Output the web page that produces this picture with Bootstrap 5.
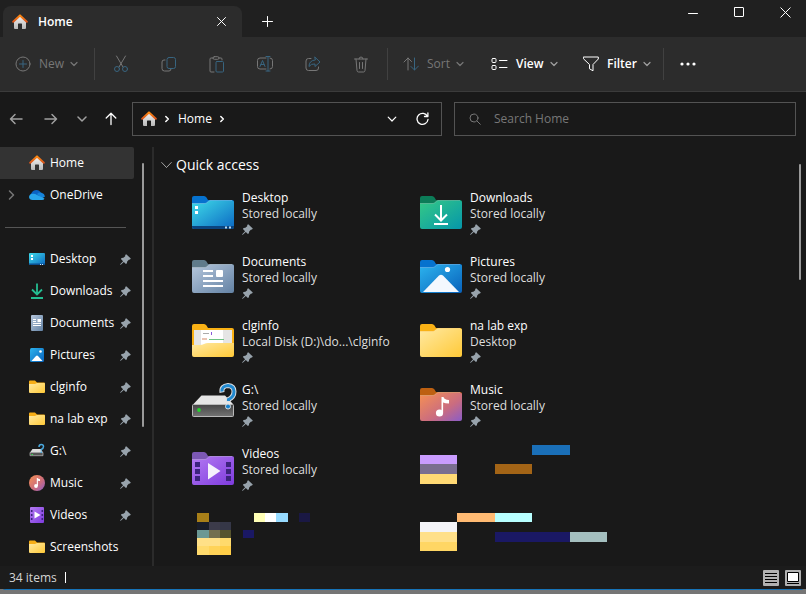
<!DOCTYPE html>
<html lang="en" data-bs-theme="dark">
<head>
<meta charset="utf-8">
<meta name="viewport" content="width=device-width, initial-scale=1">
<title>Home</title>
<link rel="stylesheet" href="https://cdn.jsdelivr.net/npm/bootstrap@5.3.0/dist/css/bootstrap.min.css">
<style>
body{font-family:"Open Sans","Noto Sans",sans-serif;font-size:12px;line-height:16px;color:#fff;background:#757575}
button{border:0;background:none;color:inherit;padding:0}
svg{display:block;flex-shrink:0}
a{color:inherit;text-decoration:none}
.window{min-height:calc(100vh - 4px);background:#191919;border-bottom:1px solid #1673b8;border-radius:0 0 6px 6px}
.line{fill:none;stroke:currentColor;stroke-linecap:round;stroke-linejoin:round}
.titlebar{background:#202020;height:37px;padding-left:3px}
.tab{background:#2c2c2c;width:239px;height:31px;border-radius:8px 8px 0 0;padding:0 15px 0 9px;gap:10px;font-weight:600}
.newtab{width:50px;height:31px}
.winctl{gap:4px}
.winctl button{width:42px;height:24px}
.center{display:flex;align-items:center;justify-content:center}
.toolbar{background:#2c2c2c;height:55px;border-bottom:1px solid #3b3b3b}
.tool{display:flex;align-items:center;height:54px;padding-left:15px;gap:8px;font-weight:600}
.tool svg:last-child{color:#a0a0a0;margin-left:-2px}
.tool.w-new{width:94px}.tool.w-sort{width:88px}.tool.w-view{width:92px}.tool.w-filter{width:95px}
.tool.off,.tool.off svg:last-child{color:#777}
.tool.off{font-weight:500}
.iconset{margin:0 2px}
.iconset button,.more{width:48px;height:54px;color:#777}
.rule{width:1px;height:32px;background:#414141}
.accent{stroke:#386580}
.navrow{height:55px;padding:0 10px 2px 0}
.navbtn{height:34px;color:#a0a0a0}
.n-back{width:32px}.n-fwd{width:38px}.n-down{width:24px}.n-up{width:34px;color:#fff}
.address,.search{height:34px;border:1px solid #535353}
.address{flex:292 1 0;margin-left:4px;padding:0 8px;gap:7px}
.search{flex:326 1 0;margin-left:12px;padding-left:14px;gap:13px;color:#777}
.search input{border:0;outline:0;background:none;color:#fff;min-width:0}
.search input::placeholder{color:#777;opacity:1}
.crumb{font-weight:500}
.side{width:134px}
.side a{display:flex;align-items:center;height:32px;padding:0 3px 0 8px;gap:5px}
.side a span{flex:1;white-space:nowrap}
.side a.current{background:#333;border-radius:0 2px 2px 0}
.twist{width:16px;flex-shrink:0;color:#777}
.side hr{margin:16px 8px 15px 5px;border-color:#555;opacity:1}
.track{width:18px;padding:16px 0 0 8px}
.thumb{width:2px;height:264px;background:#9a9a9a;border-radius:2px}
.split{width:2px;background:#2b2b2b}
.pane{padding:10px 0 0 7px}
.heading{font-size:14px;line-height:16px;gap:4px;height:16px}
.files{display:grid;grid-template-columns:repeat(auto-fill,228px);grid-auto-rows:56px;row-gap:8px;padding:17px 0 0 31px;margin:0;list-style:none}
.files a{display:flex;gap:8px}
.files small{display:block;font-size:12px;color:#dedede;white-space:nowrap}
.pin{margin-top:2px}
.maintrack{width:7px;padding-top:17px}
.maintrack .thumb{height:116px}
.status{background:#1c1c1c;height:23px;padding:0 5px 0 9px;color:#d5d5d5}
.caret{width:1px;height:11px;background:#fff;margin-left:8px}
.views{gap:6px}
</style>
<script src="https://cdn.jsdelivr.net/npm/bootstrap@5.3.0/dist/js/bootstrap.bundle.min.js"></script>
</head>
<body>
<svg width="0" height="0" class="position-absolute" aria-hidden="true">
<defs>
<linearGradient id="gHome" x1="0" y1="0" x2="0" y2="1"><stop stop-color="#f4f4f4"/><stop offset="1" stop-color="#b8b8b8"/></linearGradient>
<linearGradient id="gRoof" x1="0" y1="0" x2="0" y2="1"><stop stop-color="#ff8a12"/><stop offset="1" stop-color="#d9541c"/></linearGradient>
<linearGradient id="gYel" x1="0" y1="0" x2="1" y2="1"><stop stop-color="#ffe9a2"/><stop offset="1" stop-color="#ffc937"/></linearGradient>
<linearGradient id="gDesk" x1="0" y1="0" x2="1" y2="1"><stop stop-color="#3fdbe8"/><stop offset="1" stop-color="#0b68c3"/></linearGradient>
<linearGradient id="gDown" x1="0" y1="0" x2="1" y2="1"><stop stop-color="#35c986"/><stop offset="1" stop-color="#0596aa"/></linearGradient>
<linearGradient id="gDoc" x1="0" y1="0" x2="1" y2="1"><stop stop-color="#b6c7dc"/><stop offset="1" stop-color="#6382a4"/></linearGradient>
<linearGradient id="gPic" x1="0" y1="0" x2="1" y2="1"><stop stop-color="#2cb3ee"/><stop offset="1" stop-color="#0862bb"/></linearGradient>
<linearGradient id="gMus" x1="0" y1="0" x2="1" y2="1"><stop stop-color="#f79152"/><stop offset=".6" stop-color="#ca6c80"/><stop offset="1" stop-color="#8a5cc8"/></linearGradient>
<linearGradient id="gVid" x1="0" y1="0" x2="1" y2="1"><stop stop-color="#b47af2"/><stop offset="1" stop-color="#7e3bde"/></linearGradient>
<linearGradient id="gDisk" x1="0" y1="0" x2="0" y2="1"><stop stop-color="#454545"/><stop offset="1" stop-color="#747474"/></linearGradient>
<symbol id="home" viewBox="0 0 16 16"><path fill="url(#gHome)" d="M2 7 8 1.500l6 5.500v7q0 1-1 1h-3v-5q0-.5-.5-.5h-3q-.5 0-.5.5v5H3q-1 0-1-1z"/><path fill="none" stroke="url(#gRoof)" stroke-width="2" stroke-linecap="round" stroke-linejoin="round" d="M1.200 7.800 8 1.400l6.800 6.400"/></symbol>
<symbol id="chev" viewBox="0 0 8 8"><path class="line" stroke-width="1.200" d="m1 2.500 3 3 3-3"/></symbol>
<symbol id="chevr" viewBox="0 0 8 8"><path class="line" stroke-width="1.500" d="m2.800 1.500 2.500 2.500-2.500 2.500"/></symbol>
<symbol id="pin" viewBox="0 0 11 11"><path fill="#98a3ac" d="M6.200.2 10.800 4.600 10 5.600 8.800 5.700 7.200 7.500 6.900 9.300 5.900 9.900 3.800 7.900.8 10.800.2 10.800V10.200L3.100 7.200.9 5 1.600 4.100 3.400 3.800 5.200 2.200 5.200.9z"/></symbol>
<symbol id="folder" viewBox="0 0 16 14"><path fill="#f6ad16" d="M0 1.500Q0 .5 1 .5h5l2 2h7q1 0 1 1v6H0z"/><path fill="url(#gYel)" d="M0 4h6l2-1h7q1 0 1 1v8q0 1-1 1H1q-1 0-1-1z"/></symbol>
<symbol id="tabshape" viewBox="0 0 42 33"><path d="M0 2Q0 0 2 0H12Q13.500 0 14.500 1.500L16 4H40Q42 4 42 6V22H0z"/></symbol>
<symbol id="front" viewBox="0 0 42 33"><path d="M0 7.500H13Q14 7.500 15.500 6T18 4.500H40Q42 4.500 42 6.500V31Q42 33 40 33H2Q0 33 0 31z"/><path fill="none" stroke="#fff" stroke-opacity=".25" d="M0 7.500H13Q14 7.500 15.500 6T18 4.500H40"/></symbol>
</defs>
</svg>

<div class="window d-flex flex-column">
<header class="titlebar d-flex align-items-end">
  <div class="tab d-flex align-items-center"><svg width="16" height="16"><use href="#home"/></svg><span class="flex-grow-1">Home</span>
    <button type="button" aria-label="Close tab"><svg width="11" height="11" viewBox="0 0 11 11"><path class="line" d="m1.500 1.500 8 8m0-8-8 8"/></svg></button></div>
  <button type="button" class="newtab center" aria-label="New tab"><svg width="11" height="11" viewBox="0 0 11 11"><path class="line" d="M5.500.5v10M.5 5.500h10"/></svg></button>
  <div class="winctl d-flex ms-auto align-self-start">
    <button type="button" class="center" aria-label="Minimize"><svg width="10" height="11" viewBox="0 0 10 11"><path class="line" d="M.5 6.500h9"/></svg></button>
    <button type="button" class="center" aria-label="Maximize"><svg width="11" height="11" viewBox="0 0 11 11"><rect class="line" x=".5" y=".5" width="9" height="9" rx=".5"/></svg></button>
    <button type="button" class="center" aria-label="Close"><svg width="11" height="11" viewBox="0 0 11 11"><path class="line" d="m.8.8 9.400 9.400m0-9.400-9.400 9.400"/></svg></button>
  </div>
</header>

<div class="toolbar d-flex align-items-center" role="toolbar" aria-label="Commands">
  <button type="button" class="tool w-new off"><svg width="16" height="16" viewBox="0 0 16 16"><circle class="line" cx="8" cy="8" r="7"/><path class="line accent" d="M8 4.500v7M4.500 8h7"/></svg>New<svg width="8" height="8"><use href="#chev"/></svg></button>
  <div class="rule"></div>
  <div class="iconset d-flex">
    <button type="button" class="center" aria-label="Cut"><svg width="16" height="18" viewBox="0 0 16 18"><path class="line" d="m3.500 1 6.500 11M12.500 1 6 12"/><circle class="line accent" cx="4" cy="14" r="2.500"/><circle class="line accent" cx="12" cy="14" r="2.500"/></svg></button>
    <button type="button" class="center" aria-label="Copy"><svg width="16" height="16" viewBox="0 0 16 16"><path class="line" d="M4 4H3Q1 4 1 6v6.500Q1 15 3.500 15H8q2 0 2-2"/><rect class="line accent" x="6" y="1.500" width="8.500" height="11" rx="2"/></svg></button>
    <button type="button" class="center" aria-label="Paste"><svg width="16" height="17" viewBox="0 0 16 17"><path class="line" d="M4 2H2Q1 2 1 3v12q0 1 1 1h3M10 2h2q1 0 1 1v1"/><rect class="line" x="4" y=".7" width="6" height="2.600" rx="1.300"/><rect class="line accent" x="7" y="5.500" width="7.500" height="10.500" rx="1"/></svg></button>
    <button type="button" class="center" aria-label="Rename"><svg width="16" height="16" viewBox="0 0 16 16"><path class="line" d="M9 2H3Q.5 2 .5 4.500v6Q.5 13 3 13h6m4-11q2.500 0 2.500 2.500v6q0 2.500-2.500 2.500"/><path class="line accent" d="M9 .5h4M9 15h4M11 .5V15M3 10.500 5.500 4.500 8 10.500M4 8.500h3"/></svg></button>
    <button type="button" class="center" aria-label="Share"><svg width="16" height="16" viewBox="0 0 16 16"><path class="line" d="M6 2.500H3.500Q1 2.500 1 5v7q0 2.500 2.500 2.500H11q2.500 0 2.500-2.500v-1"/><path class="line accent" d="M10 1.200 15 6l-5 4.500V8Q6 7.500 4 10.500 4 4.500 10 4z"/></svg></button>
    <button type="button" class="center" aria-label="Delete"><svg width="16" height="17" viewBox="0 0 16 17"><path class="line" d="M1.500 3h13M6 3q0-2 2-2t2 2M3 3l1 11.500Q4.200 16 5.500 16h5q1.300 0 1.500-1.500L13 3M6.500 6.500v6M9.500 6.500v6"/></svg></button>
  </div>
  <div class="rule"></div>
  <button type="button" class="tool w-sort off"><svg width="16" height="16" viewBox="0 0 16 16"><path class="line" d="M5 14V2M1 6l4-4 3.500 3.500"/><path class="line accent" d="M11.500 2v12M8 10.500l3.500 3.500 4-4"/></svg>Sort<svg width="8" height="8"><use href="#chev"/></svg></button>
  <button type="button" class="tool w-view"><svg width="17" height="14" viewBox="0 0 17 14"><rect class="line" x="1" y="1.500" width="4" height="4" rx="1"/><rect class="line" x="1" y="8.500" width="4" height="4" rx="1"/><path class="line" d="M8.500 3.500h7.500M8.500 10.500h7.500"/></svg>View<svg width="8" height="8"><use href="#chev"/></svg></button>
  <button type="button" class="tool w-filter"><svg width="16" height="16" viewBox="0 0 16 16"><path class="line" d="M.7 1h14.600v2L10 8.500v6.300l-3.500-2V8.500L.7 3z"/></svg>Filter<svg width="8" height="8"><use href="#chev"/></svg></button>
  <div class="rule"></div>
  <button type="button" class="more center" aria-label="More"><svg width="16" height="4" viewBox="0 0 16 4" fill="#fff"><circle cx="2" cy="2" r="1.600"/><circle cx="8" cy="2" r="1.600"/><circle cx="14" cy="2" r="1.600"/></svg></button>
</div>

<div class="navrow d-flex align-items-center">
  <button type="button" class="navbtn n-back center" aria-label="Back"><svg width="14" height="12" viewBox="0 0 14 12"><path class="line" stroke-width="1.500" d="M13 6H1.500M6 1.500 1.500 6 6 10.500"/></svg></button>
  <button type="button" class="navbtn n-fwd center" aria-label="Forward"><svg width="14" height="12" viewBox="0 0 14 12"><path class="line" stroke-width="1.500" d="M1 6h11.500M8 1.500 12.500 6 8 10.500"/></svg></button>
  <button type="button" class="navbtn n-down center" aria-label="Recent locations"><svg width="10" height="10" viewBox="0 0 10 10"><path class="line" stroke-width="1.500" d="m1 3 4 4 4-4"/></svg></button>
  <button type="button" class="navbtn n-up center" aria-label="Up"><svg width="12" height="14" viewBox="0 0 12 14"><path class="line" stroke-width="1.300" d="M6 12.500V1.500M1.200 6 6 1.300 10.800 6"/></svg></button>
  <div class="address d-flex align-items-center">
    <svg width="16" height="16"><use href="#home"/></svg><svg width="7" height="8" viewBox="1 0 7 8"><use href="#chevr" width="8" height="8"/></svg>
    <a href="#" class="crumb">Home</a><svg width="7" height="8" viewBox="1 0 7 8"><use href="#chevr" width="8" height="8"/></svg>
    <button type="button" class="ms-auto me-2" aria-label="Previous locations"><svg width="10" height="10" viewBox="0 0 10 10"><path class="line" stroke-width="1.200" d="m1.200 3.200 3.800 3.800 3.800-3.800"/></svg></button>
    <button type="button" class="ms-1 me-1" aria-label="Refresh"><svg width="13" height="14" viewBox="0 0 13 14"><path class="line" stroke-width="1.300" d="M11.500 4.500A5.500 5.500 0 1 0 12 7.500M11.900 1v3.500H8.500"/></svg></button>
  </div>
  <div class="search d-flex align-items-center">
    <svg width="12" height="12" viewBox="0 0 12 12"><circle class="line" cx="5" cy="5" r="4"/><path class="line" d="m8 8 3.300 3.300"/></svg>
    <input type="search" class="flex-grow-1 p-0" aria-label="Search Home" placeholder="Search Home">
  </div>
</div>

<div class="d-flex flex-grow-1">
<nav class="side" aria-label="Folders">
  <a href="#" class="current"><i class="twist"></i><svg width="16" height="16"><use href="#home"/></svg><span>Home</span></a>
  <a href="#"><i class="twist"><svg width="8" height="12" viewBox="0 0 8 12"><path class="line" stroke-width="1.500" d="m1.500 2 4 4-4 4"/></svg></i><svg width="16" height="16" viewBox="0 0 16 16"><path fill="#0a63c4" d="M2 9Q.8 7.500 2.500 6 4 3 7.500 3q3 0 4.500 3l-3 3z"/><path fill="#1683da" d="M8 7q2-2 4.500-1.200Q15.500 6.500 16 9.500L12 12z"/><path fill="#28a5ec" d="M3.500 13Q.3 13 0 10q.3-3 3.500-3.200Q6 6.500 8 8l7.500 3.500Q15 13 13 13z"/></svg><span>OneDrive</span></a>
  <hr>
  <a href="#"><i class="twist"></i><svg width="16" height="12" viewBox="0 0 16 12"><rect width="16" height="12" rx="1" fill="url(#gDesk)"/><path fill="#fff" d="M2 2h2v2H2zM2 5h2v2H2z"/><path fill="#0a4d8e" d="M0 10.500h16V11q0 1-1 1H1q-1 0-1-1z"/><path fill="#cfeaff" d="M11 11h1v1h-1zM13 11h1v1h-1z"/></svg><span>Desktop</span><svg width="11" height="11"><use href="#pin"/></svg></a>
  <a href="#"><i class="twist"></i><svg width="16" height="16" viewBox="0 0 16 16"><path fill="none" stroke="#24bd91" stroke-width="1.800" d="M8 .5v10.500M3 6.500l5 5 5-5M2 15h12"/></svg><span>Downloads</span><svg width="11" height="11"><use href="#pin"/></svg></a>
  <a href="#"><i class="twist"></i><svg width="16" height="16" viewBox="0 0 16 16"><rect x="2" width="12" height="16" rx="1" fill="url(#gDoc)"/><path stroke="#fff" d="M4 4.500h3M4 6.500h3M4 8.500h8M4 10.500h8"/><path fill="#fff" d="M8.500 4H12v3.200H8.500z"/></svg><span>Documents</span><svg width="11" height="11"><use href="#pin"/></svg></a>
  <a href="#"><i class="twist"></i><svg width="16" height="16" viewBox="0 0 16 16"><rect x="1" y="1" width="14" height="14" rx="1.500" fill="url(#gPic)"/><path fill="#fff" d="m2.500 14 4.500-5q1-1 2 0l4.500 5z"/><circle cx="11.500" cy="4.500" r="1.300" fill="#fff"/></svg><span>Pictures</span><svg width="11" height="11"><use href="#pin"/></svg></a>
  <a href="#"><i class="twist"></i><svg width="16" height="14"><use href="#folder"/></svg><span>clginfo</span><svg width="11" height="11"><use href="#pin"/></svg></a>
  <a href="#"><i class="twist"></i><svg width="16" height="14"><use href="#folder"/></svg><span>na lab exp</span><svg width="11" height="11"><use href="#pin"/></svg></a>
  <a href="#"><i class="twist"></i><svg width="16" height="16" viewBox="0 0 16 16"><path fill="#dcdcdc" d="M1 9.500 3.500 6H12l2 3.500z"/><path fill="#555" stroke="#bbb" stroke-width=".7" d="M1 9.500h13v3.200H1z"/><path fill="#35e04a" d="M2.500 11H4v1H2.500z"/><path fill="none" stroke="#4aa8dd" stroke-width="1.500" d="M10 4q0-2.500 2.300-2.500Q14.500 1.500 14.500 3.500T12.300 6.500V7.500M12.300 8.500V10"/></svg><span>G:\</span><svg width="11" height="11"><use href="#pin"/></svg></a>
  <a href="#"><i class="twist"></i><svg width="16" height="16" viewBox="0 0 16 16"><circle cx="8" cy="8" r="8" fill="url(#gMus)"/><circle cx="7" cy="11" r="1.900" fill="#fff"/><path fill="#fff" d="M7.800 3h.8q.4 1 2.400 1.200V6Q9.800 6 8.900 5.500V11H7.800z"/></svg><span>Music</span><svg width="11" height="11"><use href="#pin"/></svg></a>
  <a href="#"><i class="twist"></i><svg width="16" height="16" viewBox="0 0 16 16"><rect x="1" width="14" height="16" rx="1" fill="url(#gVid)"/><path fill="#fff" d="m5.500 4.500 6 3.500-6 3.500z"/><path stroke="#3c237e" stroke-width="1.600" stroke-dasharray="2 2" d="M2.700 3v10.500M13.300 3v10.500"/></svg><span>Videos</span><svg width="11" height="11"><use href="#pin"/></svg></a>
  <a href="#"><i class="twist"></i><svg width="16" height="14"><use href="#folder"/></svg><span>Screenshots</span></a>
</nav>
<div class="track"><div class="thumb"></div></div>
<div class="split"></div>
<main class="pane flex-grow-1">
  <button type="button" class="heading d-flex align-items-center"><svg width="11" height="10" viewBox="0 0 11 10"><path class="line" stroke-opacity=".6" d="m.7 2.500 4.800 5 4.800-5"/></svg>Quick access</button>
  <ul class="files">
    <li><a href="#"><svg width="42" height="45" viewBox="0 -6 42 45"><g fill="#0672ce"><use href="#tabshape" width="42" height="33"/></g><g fill="url(#gDesk)"><use href="#front" width="42" height="33"/></g><path fill="#0a4480" d="M0 30h42v1q0 2-2 2H2q-2 0-2-2z"/><path fill="#b5d8f0" d="M33 30.500h2v2h-2zM37 30.500h2v2h-2z"/><path fill="#fff" d="M3 10h3v3H3zM3 15h3v3H3z"/></svg><div>Desktop<small>Stored locally</small><svg class="pin" width="11" height="11"><use href="#pin"/></svg></div></a></li>
    <li><a href="#"><svg width="42" height="45" viewBox="0 -6 42 45"><g fill="#0c7c58"><use href="#tabshape" width="42" height="33"/></g><g fill="url(#gDown)"><use href="#front" width="42" height="33"/></g><path fill="none" stroke="#fff" stroke-width="2" d="M21 9v15M15 18.500l6 6 6-6M14 28h14"/></svg><div>Downloads<small>Stored locally</small><svg class="pin" width="11" height="11"><use href="#pin"/></svg></div></a></li>
    <li><a href="#"><svg width="42" height="45" viewBox="0 -6 42 45"><g fill="#607b8b"><use href="#tabshape" width="42" height="33"/></g><g fill="url(#gDoc)"><use href="#front" width="42" height="33"/></g><path stroke="#fff" stroke-width="2" d="M11 11h10M11 16h10M11 21h20M11 26h20"/><rect x="24" y="10" width="7" height="7" rx="1" fill="#fff"/></svg><div>Documents<small>Stored locally</small><svg class="pin" width="11" height="11"><use href="#pin"/></svg></div></a></li>
    <li><a href="#"><svg width="42" height="45" viewBox="0 -6 42 45"><g fill="#0672ce"><use href="#tabshape" width="42" height="33"/></g><g fill="url(#gPic)"><use href="#front" width="42" height="33"/></g><path fill="#f3f8fe" d="M3 32 19 15.500q2-1.500 4 0L39 32z"/><circle cx="27.500" cy="9.500" r="2.600" fill="#fff"/></svg><div>Pictures<small>Stored locally</small><svg class="pin" width="11" height="11"><use href="#pin"/></svg></div></a></li>
    <li><a href="#"><svg width="42" height="45" viewBox="0 -6 42 45"><g fill="#f9b115"><use href="#tabshape" width="42" height="33"/></g><path fill="#e5e5e5" d="M2 6h38v16H2z"/><path fill="#fff" d="M9 6h22v15H9z"/><path stroke="#aaa" d="M11 9.500h6"/><path stroke="#8a57d8" d="M19.500 8v3"/><path stroke="#d58a66" d="M10 15h5"/><path stroke="#6cc283" d="M17 15.500h15"/><path fill="url(#gYel)" d="M0 21h8q2 0 4-1t4-1h26v12q0 2-2 2H2q-2 0-2-2z"/></svg><div>clginfo<small>Local Disk (D:)\do...\clginfo</small><svg class="pin" width="11" height="11"><use href="#pin"/></svg></div></a></li>
    <li><a href="#"><svg width="42" height="45" viewBox="0 -6 42 45"><g fill="#f9b115"><use href="#tabshape" width="42" height="33"/></g><g fill="url(#gYel)"><use href="#front" width="42" height="33"/></g></svg><div>na lab exp<small>Desktop</small><svg class="pin" width="11" height="11"><use href="#pin"/></svg></div></a></li>
    <li><a href="#"><svg width="42" height="45" viewBox="0 0 42 45" overflow="visible"><path fill="#e5e5e5" d="M1 22.500 9.500 13.500H33l8.500 9z"/><rect x=".5" y="22.500" width="41" height="12" rx="1" fill="url(#gDisk)" stroke="#b9b9b9"/><circle cx="7" cy="28" r="1.900" fill="#22d52b"/><g fill="none"><path stroke="#d8dde1" stroke-width="5" d="M30 10.500Q29 4 36 3.500 42 4 42 9.500T36.500 17.500V19.500"/><path stroke="#2189cf" stroke-width="3" d="M30 9.500Q29.500 4 36 3.500 42 4 42 9.500T36.500 17.500V19"/></g><circle cx="36" cy="24.500" r="2.500" fill="#1681cb" stroke="#d8dde1"/></svg><div>G:\<small>Stored locally</small><svg class="pin" width="11" height="11"><use href="#pin"/></svg></div></a></li>
    <li><a href="#"><svg width="42" height="45" viewBox="0 -6 42 45"><g fill="#bd6011"><use href="#tabshape" width="42" height="33"/></g><g fill="url(#gMus)"><use href="#front" width="42" height="33"/></g><circle cx="19.500" cy="25" r="3.600" fill="#fff"/><path fill="#fff" d="M21.500 9h2q.5 2.500 5.500 3v3.500q-4 0-5.900-1V25h-1.600z"/></svg><div>Music<small>Stored locally</small><svg class="pin" width="11" height="11"><use href="#pin"/></svg></div></a></li>
    <li><a href="#"><svg width="42" height="45" viewBox="0 -6 42 45"><g fill="#7c58b4"><use href="#tabshape" width="42" height="33"/></g><g fill="url(#gVid)"><use href="#front" width="42" height="33"/></g><path fill="#3c237e" d="M3 10h5v5H3zM3 17h5v5H3zM3 24h5v5H3zM34 10h5v5h-5zM34 17h5v5h-5zM34 24h5v5h-5z"/><path fill="#f5f1fc" d="m16 11 12.500 8L16 27.500z"/></svg><div>Videos<small>Stored locally</small><svg class="pin" width="11" height="11"><use href="#pin"/></svg></div></a></li>
    <li><svg width="190" height="50" viewBox="0 0 190 50" overflow="visible" shape-rendering="crispEdges"><path fill="#1a6fb8" d="M112-1h38V9h-38z"/><path fill="#c99cff" d="M0 9h37v9H0z"/><path fill="#7a6e90" d="M0 18h37v10H0z"/><path fill="#ffd974" d="M0 28h37v10H0z"/><path fill="#a36416" d="M75 18h37v10H75z"/></svg></li>
    <li><svg width="190" height="50" viewBox="0 0 190 50" shape-rendering="crispEdges"><path fill="#a87f18" d="M5 3h12v9H5z"/><path fill="#ffffb5" d="M62 3h11v9H62z"/><path fill="#fff" d="M73 3h11v9H73z"/><path fill="#97dbff" d="M84 3h12v9H84z"/><path fill="#1a1844" d="M107 3h11v9h-11z"/><path fill="#191d29" d="M5 12h12v8H5z"/><path fill="#3c3b4a" d="M17 12h11v8H17z"/><path fill="#353747" d="M28 12h11v8H28z"/><path fill="#6b9894" d="M5 20h12v8H5z"/><path fill="#736f50" d="M17 20h11v8H17z"/><path fill="#56542e" d="M28 20h11v8H28z"/><path fill="#1a1864" d="M51 20h11v8H51z"/><path fill="#ffe087" d="M5 28h23v8H5z"/><path fill="#ffda6c" d="M28 28h11v8H28zM5 36h12v9H5z"/><path fill="#ffd358" d="M17 36h11v9H17z"/><path fill="#ffce48" d="M28 36h11v9H28z"/></svg></li>
    <li><svg width="190" height="50" viewBox="0 0 190 50" shape-rendering="crispEdges"><path fill="#ffba73" d="M37 3h38v9H37z"/><path fill="#b7ffff" d="M75 3h37v9H75z"/><path fill="#f4f4f8" d="M0 12h37v10H0z"/><path fill="#ffe08a" d="M0 22h37v10H0z"/><path fill="#ffd664" d="M0 32h37v9H0z"/><path fill="#1a1864" d="M75 22h75v10H75z"/><path fill="#a4bfbf" d="M150 22h37v10h-37z"/></svg></li>
  </ul>
</main>
<div class="maintrack"><div class="thumb"></div></div>
</div>

<footer class="status d-flex align-items-center"><span>34 items</span><span class="caret"></span>
  <div class="views d-flex ms-auto">
    <button type="button" aria-label="Details view"><svg width="16" height="16" viewBox="0 0 16 16"><rect width="16" height="16" rx="1" fill="#b1b1b1"/><path stroke="#000" d="M2 3.500h12M2 6.500h12M2 9.500h12M2 12.500h12"/></svg></button>
    <button type="button" aria-label="Large icons view"><svg width="16" height="16" viewBox="0 0 16 16"><rect width="16" height="16" rx="1" fill="#b1b1b1"/><path fill="#fff" stroke="#000" d="M2.500 2.500h11v9h-11z"/><path stroke="#000" d="M2 13.500h12"/></svg></button>
  </div>
</footer>
</div>
</body>
</html>
